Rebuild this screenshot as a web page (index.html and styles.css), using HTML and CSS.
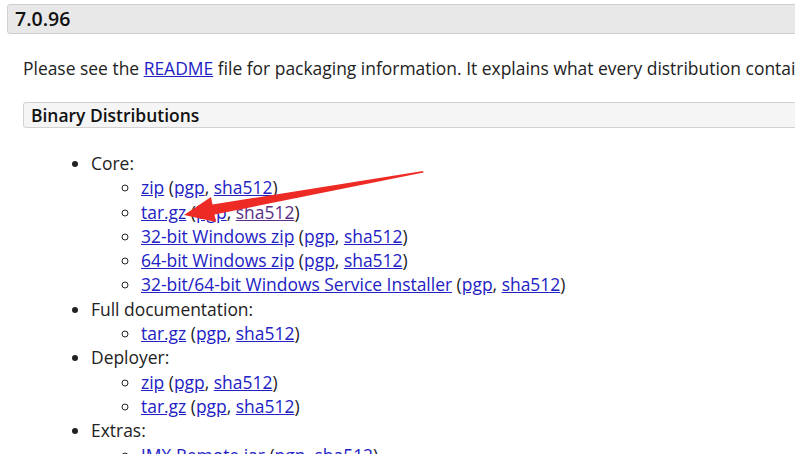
FILE: index.html
```html
<!DOCTYPE html>
<html>
<head lang="en">
    <meta charset="UTF-8">
    <title>Tomcat 7 Downloads</title>
    <link rel="stylesheet" href="styles.css">
</head>
<body>
<div id="container">
    <div class="panel">
        <h3 class="panel-title">7.0.96</h3>
        <div class="panel-body">
            <p class="intro">Please see the <a href="#">README</a> file for packaging information. It explains what every distribution contains.</p>
            <div class="sub-panel">
                <h4 class="sub-title">Binary Distributions</h4>
                <ul class="dist">
                    <li>Core:
                        <ul>
                            <li><a href="#">zip</a> (<a href="#">pgp</a>, <a href="#">sha512</a>)</li>
                            <li><a href="#">tar.gz</a> (<a href="#">pgp</a>, <a href="#" class="visited">sha512</a>)</li>
                            <li><a href="#">32-bit Windows zip</a> (<a href="#">pgp</a>, <a href="#">sha512</a>)</li>
                            <li><a href="#">64-bit Windows zip</a> (<a href="#">pgp</a>, <a href="#">sha512</a>)</li>
                            <li><a href="#">32-bit/64-bit Windows Service Installer</a> (<a href="#">pgp</a>, <a href="#">sha512</a>)</li>
                        </ul>
                    </li>
                    <li>Full documentation:
                        <ul>
                            <li><a href="#">tar.gz</a> (<a href="#">pgp</a>, <a href="#">sha512</a>)</li>
                        </ul>
                    </li>
                    <li>Deployer:
                        <ul>
                            <li><a href="#">zip</a> (<a href="#">pgp</a>, <a href="#">sha512</a>)</li>
                            <li><a href="#">tar.gz</a> (<a href="#">pgp</a>, <a href="#">sha512</a>)</li>
                        </ul>
                    </li>
                    <li>Extras:
                        <ul>
                            <li><a href="#">JMX Remote jar</a> (<a href="#">pgp</a>, <a href="#">sha512</a>)</li>
                        </ul>
                    </li>
                </ul>
            </div>
        </div>
    </div>
</div>

<!-- red annotation arrow drawn over the list -->
<svg class="arrow" width="795" height="454" viewBox="0 0 795 454">
    <polygon fill="#ee2a24" points="184,215 211,197 212.5,204.5 423,171 423.5,172.5 214.5,214.5 216,222"/>
</svg>
</body>
</html>
```

FILE: styles.css
```css
*{
    margin: 0;
    padding: 0;
}
html,body{
    overflow: hidden;
}
body{
    background: #fff;
    color: #222;
    font-family: "Open Sans", "Liberation Sans", sans-serif;
    font-size: 17.45px;
    white-space: nowrap;
}
a{
    color: #2121c4;
}
a.visited{
    color: #5a2f86;
}
#container{
    width: 1200px;
    padding: 4px 0 0 7px;
}
.panel-title{
    height: 28px;
    line-height: 28px;
    padding-left: 7px;
    background: #e8e8e8;
    border: 1px solid #cfcfcf;
    border-radius: 3px;
    font-size: 19.5px;
    font-weight: 600;
    color: #111;
}
.panel-body{
    padding-left: 16px;
}
.intro{
    margin-top: 22px;
    line-height: 25px;
}
.sub-panel{
    margin-top: 21px;
}
.sub-title{
    height: 24px;
    line-height: 24px;
    padding-left: 7px;
    background: #f5f5f5;
    border: 1px solid #d2d2d2;
    border-radius: 3px;
    font-size: 17.45px;
    font-weight: 600;
    color: #111;
}
.dist{
    margin-top: 23px;
    padding-left: 68px;
    list-style: disc;
    line-height: 24.3px;
}
.dist ul{
    padding-left: 50px;
    list-style: circle;
}
.arrow{
    position: absolute;
    left: 0;
    top: 0;
}
```
